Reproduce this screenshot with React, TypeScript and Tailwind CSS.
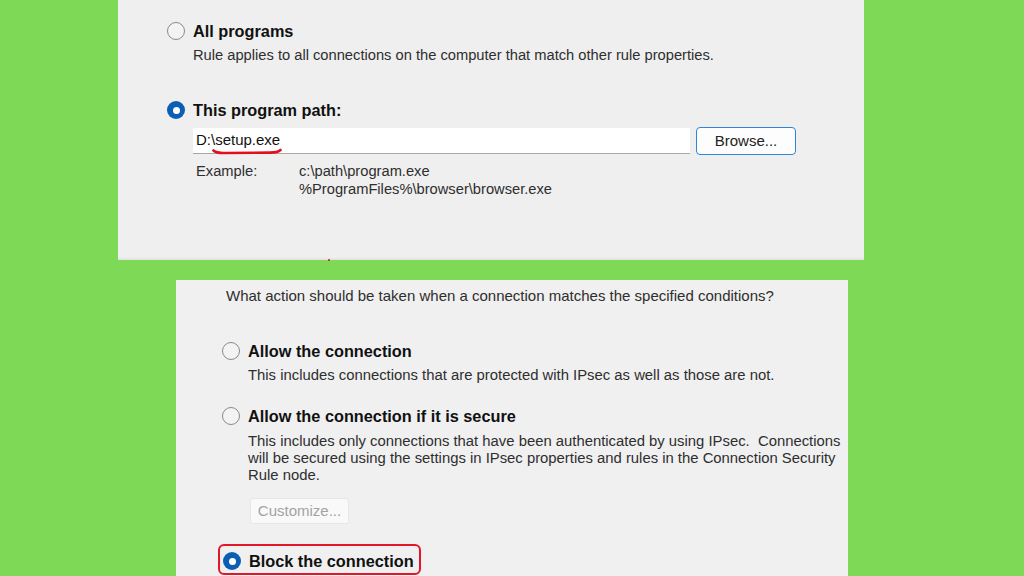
import type { ReactNode } from "react";

const font = { fontFamily: '"Liberation Sans", Arial, sans-serif' };

function Radio({ checked = false }: { checked?: boolean }) {
  if (checked) {
    return (
      <span className="flex h-[18px] w-[18px] shrink-0 items-center justify-center rounded-full bg-[#0a5fb4]">
        <span className="h-[7px] w-[7px] rounded-full bg-white" />
      </span>
    );
  }
  return <span className="h-[18px] w-[18px] shrink-0 rounded-full border border-[#8a8a8a] bg-[#f3f3f3]" />;
}

function Option({ checked, title, children }: { checked?: boolean; title: string; children?: ReactNode }) {
  return (
    <div>
      <div className="flex items-center gap-[8px]">
        <Radio checked={checked} />
        <span className="text-[16.3px] leading-[18px] font-bold whitespace-nowrap text-[#111]">{title}</span>
      </div>
      {children}
    </div>
  );
}

export default function App() {
  return (
    <div className="flex h-[576px] w-[1024px] flex-col overflow-hidden bg-[#7ed957]" style={font}>
      {/* program page */}
      <section className="relative ml-[118px] h-[260px] w-[746px] shrink-0 border-b-2 border-[#e4e4e4] bg-[#efefef] pt-[22px] pl-[49px]">
        <Option title="All programs">
          <p className="mt-[6px] pl-[26px] text-[14.7px] leading-[18px] whitespace-nowrap text-[#2e2e2e]">
            Rule applies to all connections on the computer that match other rule properties.
          </p>
        </Option>

        <div className="mt-[37px]">
          <Option checked title="This program path:">
            <div className="mt-[8px] flex items-center gap-[6px] pl-[26px]">
              <div className="relative flex h-[26px] w-[497px] items-center border-b border-[#a8a8a8] bg-white px-[3px] text-[15px] text-[#111]">
                D:\setup.exe
                <svg className="absolute top-[20px] left-[19px]" width="72" height="8" viewBox="0 0 72 8">
                  <path d="M1.5 2.5 Q4 5 12 5 L58 4.6 Q66 4.6 68.5 2" fill="none" stroke="#e0101c" strokeWidth="2.6" strokeLinecap="round" />
                </svg>
              </div>
              <button className="h-[28px] w-[100px] rounded-[4px] border-[1.5px] border-[#2f86d6] bg-[#fdfdfd] text-[15px] text-[#222]">
                Browse...
              </button>
            </div>
            <div className="mt-[7px] flex pl-[29px] text-[14.7px] leading-[18px] text-[#2e2e2e]">
              <span className="w-[103px]">Example:</span>
              <div>
                <div>c:\path\program.exe</div>
                <div>%ProgramFiles%\browser\browser.exe</div>
              </div>
            </div>
          </Option>
        </div>

        <span className="absolute -bottom-[3px] left-[210px] h-[2px] w-[2px] rounded-full bg-[#e0101c]" />
      </section>

      {/* action page */}
      <section className="mt-[20px] ml-[176px] w-[672px] flex-1 overflow-hidden bg-[#f0f0f0] pt-[7px] pl-[46px]">
        <p className="ml-[4px] text-[15px] leading-[18px] whitespace-nowrap text-[#2e2e2e]">
          What action should be taken when a connection matches the specified conditions?
        </p>

        <div className="mt-[37px]">
          <Option title="Allow the connection">
            <p className="mt-[6px] pl-[26px] text-[14.85px] leading-[18px] whitespace-nowrap text-[#2e2e2e]">
              This includes connections that are protected with IPsec as well as those are not.
            </p>
          </Option>
        </div>

        <div className="mt-[23px]">
          <Option title="Allow the connection if it is secure">
            <p className="mt-[8px] pl-[26px] text-[14.85px] leading-[17px] whitespace-nowrap text-[#2e2e2e]">
              This includes only connections that have been authenticated by using IPsec.&nbsp; Connections
              <br />
              will be secured using the settings in IPsec properties and rules in the Connection Security
              <br />
              Rule node.
            </p>
            <button
              disabled
              className="mt-[14px] ml-[28px] h-[26px] w-[99px] rounded-[3px] border border-[#e6e6e6] bg-[#f9f9f9] text-[15px] text-[#a3a3a3]"
            >
              Customize...
            </button>
          </Option>
        </div>

        <div className="mt-[20px] -ml-[4px] w-[203px] rounded-[6px] border-[2.5px] border-[#e3162a] pt-[6px] pb-[3px] pl-[3px]">
          <Option checked title="Block the connection" />
        </div>
      </section>
    </div>
  );
}
